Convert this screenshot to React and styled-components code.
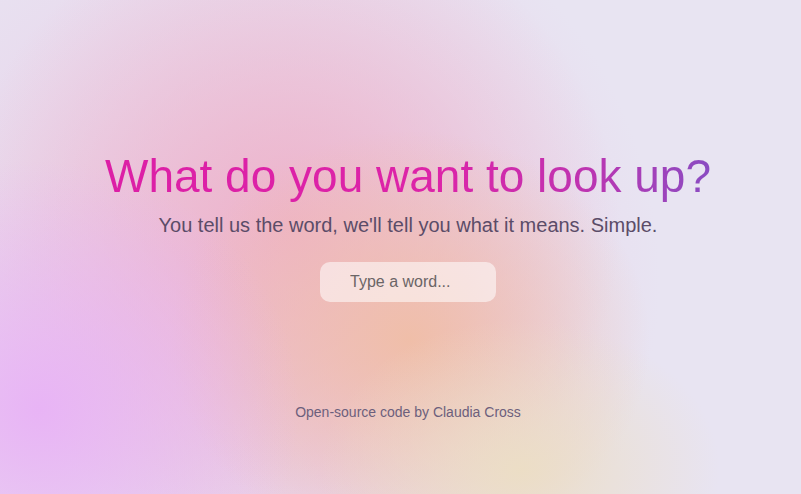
import React from 'react';
import styled, { createGlobalStyle } from 'styled-components';

const GlobalStyle = createGlobalStyle`
  html, body {
    margin: 0;
    padding: 0;
  }
  body {
    font-family: "Liberation Sans", Arial, sans-serif;
    background: #e8e4f2;
  }
`;

const Page = styled.div`
  width: 100vw;
  height: 494px;
  overflow: hidden;
  box-sizing: border-box;
  padding: 148px 0 0 15px;
  display: flex;
  flex-direction: column;
  align-items: center;
  background:
    radial-gradient(ellipse 260px 250px at 40px 410px, rgba(232, 178, 246, 0.95), rgba(232, 178, 246, 0) 100%),
    radial-gradient(ellipse 200px 150px at 520px 470px, rgba(236, 222, 196, 0.95), rgba(236, 222, 196, 0) 100%),
    radial-gradient(ellipse 240px 210px at 410px 340px, rgba(240, 190, 166, 0.95), rgba(240, 190, 166, 0) 100%),
    radial-gradient(ellipse 330px 320px at 290px 230px, rgba(238, 178, 200, 0.95), rgba(238, 178, 200, 0) 100%),
    radial-gradient(ellipse 420px 420px at 240px 280px, rgba(234, 186, 222, 0.7), rgba(234, 186, 222, 0) 100%),
    #e8e4f2;
`;

const Title = styled.h1`
  margin: 0;
  font-size: 46px;
  font-weight: 400;
  line-height: 56px;
  background: linear-gradient(90deg, #dc1fa6 0%, #dc24a8 55%, #c033b0 78%, #8a4cc2 100%);
  -webkit-background-clip: text;
  background-clip: text;
  color: transparent;
`;

const Subtitle = styled.p`
  margin: 9px 0 0;
  font-size: 20px;
  line-height: 24px;
  color: #5b4c68;
`;

const SearchInput = styled.input`
  margin-top: 25px;
  width: 176px;
  height: 40px;
  box-sizing: border-box;
  border: none;
  border-radius: 10px;
  padding: 0 0 0 30px;
  background: rgba(255, 255, 255, 0.55);
  font-family: "Liberation Sans", Arial, sans-serif;
  font-size: 16px;
  color: #444;
  outline: none;
  &::placeholder {
    color: #6b6566;
  }
`;

const Footer = styled.footer`
  margin-top: auto;
  margin-bottom: 74px;
  font-size: 14px;
  color: #6c5f7c;
`;

export default function App() {
  return (
    <>
      <GlobalStyle />
      <Page>
        <Title>What do you want to look up?</Title>
        <Subtitle>You tell us the word, we'll tell you what it means. Simple.</Subtitle>
        <SearchInput type="text" placeholder="Type a word..." />
        <Footer>Open-source code by Claudia Cross</Footer>
      </Page>
    </>
  );
}
